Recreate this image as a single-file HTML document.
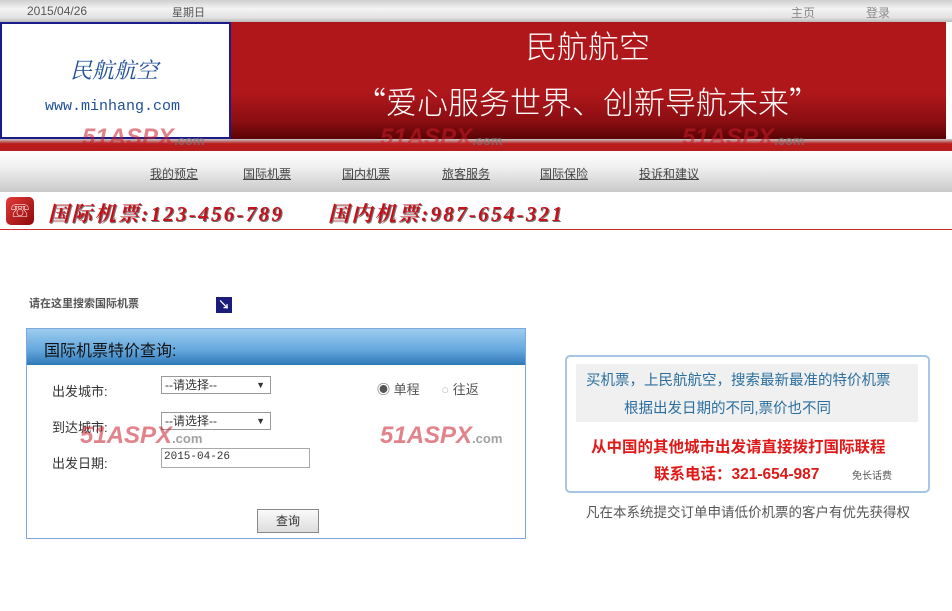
<!DOCTYPE html>
<html><head><meta charset="utf-8"><style>
*{margin:0;padding:0;box-sizing:border-box}
body{width:952px;height:611px;background:#fff;font-family:"Liberation Sans","Noto Sans CJK SC",sans-serif;position:relative;overflow:hidden;font-size:12px;color:#333}
.a{position:absolute}
.top{left:0;top:0;width:952px;height:22px;background:linear-gradient(#cfcfcf,#f4f4f4 40%,#e2e2e2 80%,#bbb)}
.banner{left:0;top:22px;width:946px;height:117px;background:linear-gradient(#b0171b,#b0171b 60%,#8a0e12 85%,#5a0305)}
.logo{left:0;top:22px;width:231px;height:117px;background:#fff;border:2px solid #1a1a8c}
.strip{left:0;top:139px;width:952px;height:12px;background:linear-gradient(#c8c8c8,#b91c1c 40%,#b91c1c)}
.nav{left:0;top:151px;width:952px;height:41px;background:linear-gradient(#fff,#f0f0f0 40%,#c9c9c9)}
.nav span{position:absolute;top:14px;font-size:12px;color:#444;text-decoration:underline}
.ph{font-family:"Liberation Serif","Noto Serif CJK SC",serif;font-style:italic;font-weight:bold;color:#c8101a;font-size:21px;top:198px;text-shadow:1px 1px 0 #777;letter-spacing:2.3px}
.wm{font-weight:bold;font-style:italic;font-size:24px;color:rgba(200,30,40,.55)}
.wm small{font-size:13px;color:rgba(120,120,120,.7);font-style:normal}
.panel{left:26px;top:328px;width:500px;height:211px;border:1px solid #7fa7dc}
.ph2{left:0;top:0;width:498px;height:36px;background:linear-gradient(#9cccef,#62a6dc 60%,#2f78b8);font-size:16px;color:#111;padding:8px 0 0 17px}
.lbl{font-size:13px;color:#333}
.sel{width:110px;height:18px;border:1px solid #999;font-size:12px;padding-left:3px;line-height:16px;background:#fff}
.sel b{position:absolute;right:5px;top:0;font-size:9px}
</style></head><body>
<div class="a top"></div>
<div class="a" style="left:27px;top:4px;font-size:12px;color:#555">2015/04/26</div>
<div class="a" style="left:172px;top:4px;font-size:11px;color:#555">星期日</div>
<div class="a" style="left:791px;top:4px;font-size:12px;color:#888">主页</div>
<div class="a" style="left:866px;top:4px;font-size:12px;color:#888">登录</div>
<div class="a banner"></div>
<div class="a logo"></div>
<div class="a" style="left:70px;top:54px;font-size:22px;color:#1f4f96;font-family:'Noto Serif CJK SC',serif;font-style:italic">民航航空</div>
<div class="a" style="left:45px;top:98px;font-size:15px;color:#1f4f96;font-family:'Liberation Mono',monospace">www.minhang.com</div>
<div class="a" style="left:526px;top:22px;font-size:31px;color:#fff;font-family:'Noto Sans CJK SC',sans-serif;font-weight:300">民航航空</div>
<div class="a" style="left:355px;top:78px;font-size:31px;color:#fff;font-family:'Noto Sans CJK SC',sans-serif;font-weight:300">“爱心服务世界、创新导航未来”</div>
<div class="a strip"></div>
<div class="a wm" style="left:82px;top:124px">51ASPX<small>.com</small></div>
<div class="a wm" style="left:380px;top:124px">51ASPX<small>.com</small></div>
<div class="a wm" style="left:682px;top:124px">51ASPX<small>.com</small></div>
<div class="a nav">
<span style="left:150px">我的预定</span><span style="left:243px">国际机票</span><span style="left:342px">国内机票</span><span style="left:442px">旅客服务</span><span style="left:540px">国际保险</span><span style="left:639px">投诉和建议</span>
</div>
<div class="a" style="left:6px;top:197px;width:28px;height:28px;border-radius:5px;background:linear-gradient(135deg,#e43a3a,#8d0a0a);color:#fff;font-size:18px;text-align:center;line-height:28px">☏</div>
<div class="a ph" style="left:48px">国际机票:123-456-789</div>
<div class="a ph" style="left:328px">国内机票:987-654-321</div>
<div class="a" style="left:0;top:229px;width:952px;height:1px;background:#d02a30"></div>
<div class="a" style="left:29px;top:295px;font-size:11px;font-weight:bold;color:#555">请在这里搜索国际机票</div>
<div class="a" style="left:216px;top:297px;width:16px;height:16px;background:#1b1b7a;color:#fff;font-size:12px;line-height:16px;text-align:center;font-weight:bold">↘</div>
<div class="a panel">
<div class="a ph2">国际机票特价查询:</div>
<div class="a lbl" style="left:25px;top:52px">出发城市:</div>
<div class="a sel" style="left:134px;top:47px">--请选择--<b>▼</b></div>
<div class="a lbl" style="left:350px;top:50px;color:#555">◉ 单程 &nbsp; &nbsp; &nbsp;<span style="color:#bbb">○</span> 往返</div>
<div class="a lbl" style="left:25px;top:88px">到达城市:</div>
<div class="a sel" style="left:134px;top:83px">--请选择--<b>▼</b></div>
<div class="a lbl" style="left:25px;top:124px">出发日期:</div>
<div class="a" style="left:134px;top:119px;width:149px;height:20px;border:1px solid #aaa;font-size:11px;padding:2px 2px;font-family:'Liberation Mono',monospace">2015-04-26</div>
<div class="a" style="left:230px;top:180px;width:62px;height:24px;border:1px solid #888;background:linear-gradient(#fafafa,#ddd);text-align:center;line-height:22px;font-size:12px">查询</div>
</div>
<div class="a wm" style="left:80px;top:422px">51ASPX<small>.com</small></div>
<div class="a wm" style="left:380px;top:422px">51ASPX<small>.com</small></div>
<div class="a" style="left:565px;top:355px;width:365px;height:138px;border:2px solid #a8c4e6;border-radius:5px"></div>
<div class="a" style="left:576px;top:364px;width:342px;height:58px;background:#f0f0f0"></div>
<div class="a" style="left:586px;top:369px;font-size:14.5px;color:#2b6f9e">买机票，上民航航空，搜索最新最准的特价机票</div>
<div class="a" style="left:624px;top:397px;font-size:14.5px;color:#2b6f9e">根据出发日期的不同,票价也不同</div>
<div class="a" style="left:591px;top:435px;font-size:15.5px;font-weight:bold;color:#e01818">从中国的其他城市出发请直接拨打国际联程</div>
<div class="a" style="left:654px;top:462px;font-size:15.5px;font-weight:bold;color:#e01818">联系电话：321-654-987</div>
<div class="a" style="left:852px;top:467px;font-size:10px;color:#555">免长话费</div>
<div class="a" style="left:586px;top:501px;font-size:13.5px;color:#555">凡在本系统提交订单申请低价机票的客户有优先获得权</div>
</body></html>
